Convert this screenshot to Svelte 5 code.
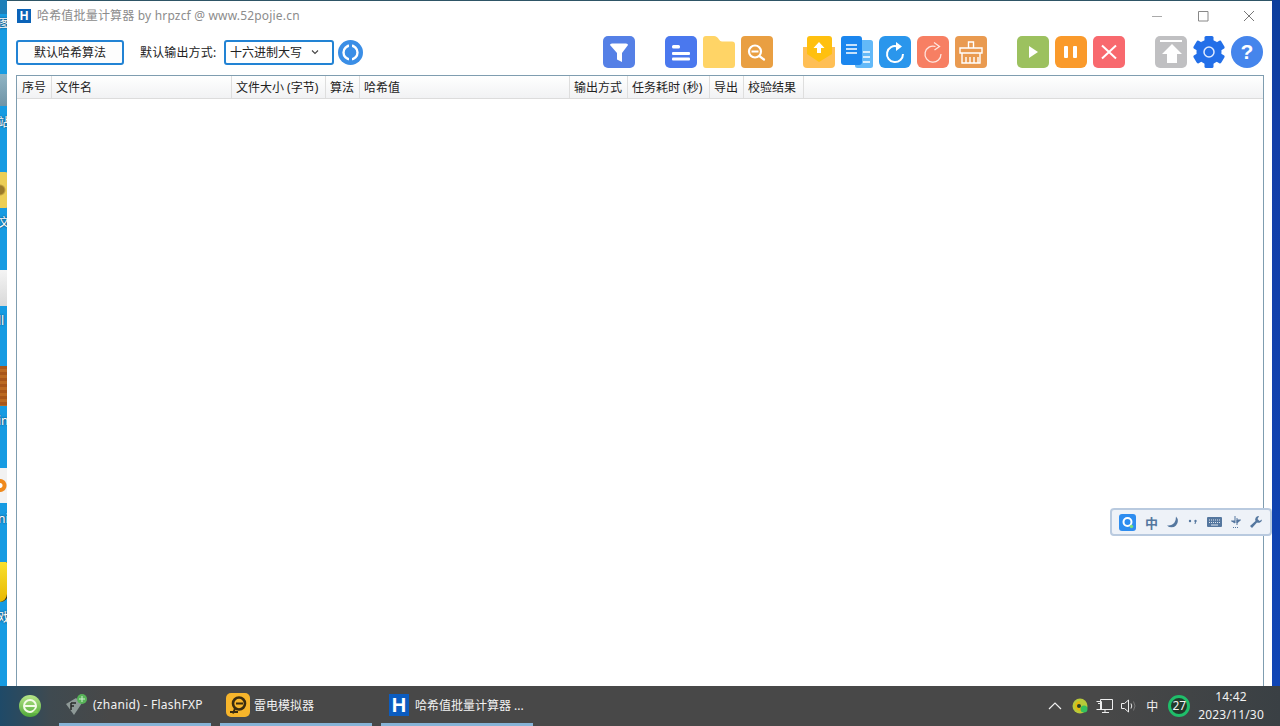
<script>
  const columns = [
    { label: '序号', w: 35 },
    { label: '文件名', w: 180 },
    { label: '文件大小 (字节)', w: 94 },
    { label: '算法', w: 34 },
    { label: '哈希值', w: 210 },
    { label: '输出方式', w: 58 },
    { label: '任务耗时 (秒)', w: 82 },
    { label: '导出', w: 34 },
    { label: '校验结果', w: 60 }
  ];
  const teeth = [0, 60, 120, 180, 240, 300];
</script>

<div class="screen">
  <div class="desk">
    <div class="strip left">
      <span class="frag f1"></span>
      <span class="lbl" style="top:17px">图</span>
      <span class="frag f2"></span>
      <span class="lbl" style="top:116px">站</span>
      <span class="frag f3"></span>
      <span class="lbl" style="top:216px">文</span>
      <span class="frag f4"></span>
      <span class="lbl" style="top:314px">ll</span>
      <span class="frag f5"></span>
      <span class="lbl" style="top:414px">in</span>
      <span class="frag f6"></span>
      <span class="lbl" style="top:512px">ni</span>
      <span class="frag f7"></span>
      <span class="lbl" style="top:611px">戏</span>
    </div>

    <div class="win">
      <header class="title">
        <div class="logo">H</div>
        <span class="title-text">哈希值批量计算器 by hrpzcf @ www.52pojie.cn</span>
        <div class="caption">
          <svg width="12" height="12" viewBox="0 0 12 12"><path d="M1 6.500h10" stroke="#aaa" fill="none"/></svg>
          <svg width="12" height="12" viewBox="0 0 12 12"><path d="M1.500 1.500h9.500v9.500h-9.500z" stroke="#888" fill="none"/></svg>
          <svg width="12" height="12" viewBox="0 0 12 12"><path d="M1 1l10 10M11 1L1 11" stroke="#777" fill="none"/></svg>
        </div>
      </header>

      <div class="toolbar">
        <button class="algo">默认哈希算法</button>
        <span class="out-label">默认输出方式:</span>
        <div class="select">
          <span>十六进制大写</span>
          <svg width="8" height="6" viewBox="0 0 8 6"><path d="M1 1.500l3 3 3-3" stroke="#444" stroke-width="1.100" fill="none"/></svg>
        </div>
        <svg class="reload" width="25" height="25" viewBox="0 0 25 25">
          <circle cx="12.500" cy="12.500" r="12.500" fill="#3a8ee6"/>
          <circle cx="12.500" cy="12.500" r="7" fill="none" stroke="#fff" stroke-width="2.400"/>
          <path d="M12.500 2v6M12.500 17v6" stroke="#3a8ee6" stroke-width="3"/>
        </svg>

        <div class="tools">
          <div class="group">
            <svg class="ic" viewBox="0 0 32 32"><rect width="32" height="32" rx="5" fill="#5580e6"/><path d="M7 9q0-1.500 2-1.500h14q2 0 2 1.500l-6 8v9l-5-2.500v-6.500z" fill="#fff"/></svg>
          </div>
          <div class="group">
            <svg class="ic" viewBox="0 0 32 32"><rect width="32" height="32" rx="5" fill="#4a78ee"/><rect x="7" y="9" width="8" height="3.500" rx="1.500" fill="#fff"/><rect x="7" y="16" width="18" height="3" rx="1" fill="#fff"/><rect x="7" y="21.500" width="18" height="3" rx="1" fill="#fff"/></svg>
            <svg class="ic" viewBox="0 0 32 32"><path d="M0 3q0-3 3-3h8q3 0 5 3.500q1 2 3 2h10q3 0 3 3v20q0 3.500-3 3.500H3q-3 0-3-3.500z" fill="#ffd466"/></svg>
            <svg class="ic" viewBox="0 0 32 32"><rect width="32" height="32" rx="4" fill="#e99f42"/><circle cx="14" cy="15.500" r="6" fill="none" stroke="#fff" stroke-width="2.200"/><path d="M10.500 15.500h7" stroke="#fff" stroke-width="2"/><path d="M19 20.500l4 3" stroke="#fff" stroke-width="2.200" stroke-linecap="round"/></svg>
          </div>
          <div class="group">
            <svg class="ic" viewBox="0 0 32 32"><path d="M0 11h32v17q0 4-4 4H4q-4 0-4-4z" fill="#ffbf55"/><path d="M4 3q0-3 3-3h19q3 0 3 3v15l-13 8-12-8z" fill="#ffc00f"/><path d="M16 6l5.500 6h-3.500v5h-4v-5h-3.500z" fill="#fff"/></svg>
            <svg class="ic" viewBox="0 0 32 32"><rect x="14" y="4" width="18" height="28" rx="2.500" fill="#63b9f8"/><rect width="21" height="29" rx="3" fill="#1b86ee"/><path d="M5 9h11M5 13h11M5 17h11" stroke="#fff" stroke-width="1.500"/><path d="M22 16h7M22 21h7M22 26h7" stroke="#fff" stroke-width="1.500"/></svg>
            <svg class="ic" viewBox="0 0 32 32"><rect width="32" height="32" rx="6" fill="#2a96ec"/><path d="M18.500 10.500A8 8 0 1 0 24 18" fill="none" stroke="#fff" stroke-width="2"/><path d="M17 6l6 4.500-6 4.500z" fill="#fff"/></svg>
            <svg class="ic" viewBox="0 0 32 32"><rect width="32" height="32" rx="6" fill="#f77f63"/><path d="M18.500 10.500A8 8 0 1 0 24 18" fill="none" stroke="#ffe6df" stroke-width="1.300"/><path d="M17 6.500l5.500 4-5 3.500" fill="none" stroke="#ffe6df" stroke-width="1.300"/></svg>
            <svg class="ic" viewBox="0 0 32 32"><rect width="32" height="32" rx="4" fill="#e99a50"/><path d="M13.500 12V6h5v6M5 12h22v5H5zM7 17v10h18V17M11 21v6M15 21v6M19 21v6M23 21v6" fill="none" stroke="#fff" stroke-width="1.400"/></svg>
          </div>
          <div class="group">
            <svg class="ic" viewBox="0 0 32 32"><rect width="32" height="32" rx="5" fill="#9cc15f"/><path d="M12 10l9 6-9 6z" fill="#fff"/></svg>
            <svg class="ic" viewBox="0 0 32 32"><rect width="32" height="32" rx="6" fill="#fa9a2b"/><rect x="9" y="10" width="4" height="12" rx="1" fill="#fff"/><rect x="18" y="10" width="4" height="12" rx="1" fill="#fff"/></svg>
            <svg class="ic" viewBox="0 0 32 32"><rect width="32" height="32" rx="5" fill="#f8696e"/><path d="M9 9.500l14 13M23 9.500l-14 13" stroke="#fff" stroke-width="2"/></svg>
          </div>
          <div class="group">
            <svg class="ic" viewBox="0 0 32 32"><rect width="32" height="32" rx="5" fill="#c0c0c2"/><rect x="5" y="4" width="22" height="2" fill="#fff"/><path d="M17 8l10 10h-5v9H12v-9H7z" fill="#fff"/></svg>
            <svg class="ic" viewBox="0 0 32 32">
              {#each teeth as t}
                <rect x="11.500" y="0" width="9" height="8" rx="1.500" fill="#236fe8" transform="rotate({t} 16 16)"/>
              {/each}
              <circle cx="16" cy="16" r="12.500" fill="#236fe8"/>
              <circle cx="16" cy="16" r="5" fill="none" stroke="#dfeaff" stroke-width="1.500"/>
            </svg>
            <div class="help">?</div>
          </div>
        </div>
      </div>

      <div class="table">
        <div class="thead">
          {#each columns as c}
            <div class="th" style="width:{c.w}px">{c.label}</div>
          {/each}
        </div>
      </div>

      <div class="ime">
        <svg width="17" height="17" viewBox="0 0 17 17"><rect width="17" height="17" rx="3" fill="#2e8df0"/><circle cx="8.500" cy="8" r="4" fill="none" stroke="#fff" stroke-width="2"/><circle cx="12.500" cy="12.500" r="1.700" fill="#7be07a"/></svg>
        <span class="ime-zh">中</span>
        <svg width="12" height="12" viewBox="0 0 12 12"><path d="M9 .5A6 6 0 0 1 0 9.500q5 .5 7.500-3Q9 4 9 .5z" fill="#55779f"/></svg>
        <svg width="10" height="12" viewBox="0 0 10 12"><circle cx="2" cy="5" r="1.200" fill="#55779f"/><circle cx="7.500" cy="5" r="1.200" fill="#55779f"/><path d="M7.500 6l-.5 2" stroke="#55779f"/></svg>
        <svg width="15" height="10" viewBox="0 0 15 10"><rect width="15" height="10" rx="1" fill="#55779f"/><path d="M2 3h11M2 5.500h11" stroke="#dfe6ef" stroke-dasharray="1 1"/><path d="M4 8h7" stroke="#dfe6ef"/></svg>
        <svg width="10" height="14" viewBox="0 0 10 14"><path d="M4 1v7L.5 6h3.500M6 3v7M6 5h3.500L6 8z" fill="#55779f" stroke="#55779f"/><path d="M2 12.500h6" stroke="#55779f" stroke-dasharray="1 1"/></svg>
        <svg width="12" height="12" viewBox="0 0 12 12"><path d="M8.500 0a3.500 3.500 0 0 0-3 5L0 10l2 2 5-5.500A3.500 3.500 0 0 0 12 3.500L9.500 5 7.500 3 9 .2z" fill="#55779f"/></svg>
      </div>
    </div>

    <div class="strip right"></div>
  </div>

  <footer class="taskbar">
    <div class="start">
      <svg width="24" height="24" viewBox="0 0 24 24">
        <defs><linearGradient id="st" x1="0" y1="0" x2="0" y2="1"><stop offset="0" stop-color="#b8e68a"/><stop offset="1" stop-color="#4fa838"/></linearGradient></defs>
        <circle cx="12" cy="12" r="11" fill="url(#st)"/><circle cx="12" cy="12" r="6" fill="none" stroke="#f4fbe8" stroke-width="2"/><path d="M6.500 12h11" stroke="#f4fbe8" stroke-width="2"/><path d="M19 14l-5 5h6z" fill="#79c650"/>
      </svg>
    </div>
    <div class="task first">
      <svg width="24" height="24" viewBox="0 0 24 24"><path d="M1 11l10-6 6 5-8 12z" fill="#8f9a98"/><path d="M6 10h5M6 10v7M6 13h3" stroke="#2a2a2a" stroke-width="1.500" fill="none"/><circle cx="17" cy="6" r="5" fill="#57b358"/><path d="M14 6h6M17 3v6" stroke="#d0f0d0"/></svg>
      <span class="latin">(zhanid) - FlashFXP</span>
    </div>
    <div class="task">
      <svg width="24" height="24" viewBox="0 0 24 24"><rect width="24" height="24" rx="5" fill="#f7b52b"/><circle cx="13" cy="10.500" r="6" fill="none" stroke="#3a2c10" stroke-width="2.600"/><path d="M9 15.500l-2 5M4 19h8M10 10.500h7" stroke="#3a2c10" stroke-width="2"/></svg>
      <span>雷电模拟器</span>
    </div>
    <div class="task">
      <div class="logo big">H</div>
      <span>哈希值批量计算器 ...</span>
    </div>

    <div class="tray">
      <svg class="chev" width="14" height="8" viewBox="0 0 14 8"><path d="M1 7l6-6 6 6" stroke="#f0f0f0" stroke-width="1.200" fill="none"/></svg>
      <svg width="16" height="16" viewBox="0 0 16 16"><circle cx="8" cy="8" r="7.500" fill="#b8c93a"/><path d="M8 3a5 5 0 1 0 5 5H8z" fill="#e2b80f"/><circle cx="7" cy="8" r="2" fill="#26402a"/><circle cx="12" cy="11" r="3.500" fill="#35c05c"/></svg>
      <svg width="17" height="16" viewBox="0 0 17 16"><path d="M4.500 1.500h12v10h-12zM.5 3.500h5v8h-5M9 11.500v3M6 14.500h7M2 5.500h2" fill="none" stroke="#eee"/></svg>
      <svg width="16" height="14" viewBox="0 0 16 14"><path d="M.5 4.500h3l4-3.500v12l-4-3.500h-3z" fill="none" stroke="#eee"/><path d="M10 4.500q1.500 2.500 0 5" fill="none" stroke="#eee"/><path d="M12.500 2.500q3 4.500 0 9" fill="none" stroke="#777"/></svg>
      <span class="tray-zh">中</span>
      <div class="badge">27</div>
      <div class="clock"><div>14:42</div><div>2023/11/30</div></div>
    </div>
  </footer>
</div>

<style>
  :global(body) {
    margin: 0;
    overflow: hidden;
    font-family: "Noto Sans", "Noto Sans CJK SC", sans-serif;
  }
  .screen {
    width: 1280px;
    height: 726px;
    display: flex;
    flex-direction: column;
    overflow: hidden;
    font-size: 12px;
  }
  .desk {
    flex: 1;
    min-height: 0;
    display: flex;
  }
  .strip.left {
    position: relative;
    width: 7px;
    background: #169be2;
    overflow: hidden;
  }
  .strip.right {
    width: 8px;
    background: linear-gradient(#0c3e9c, #123ea8 20%, #0f45b5);
  }
  .frag { position: absolute; left: 0; width: 8px; }
  .f1 { top: 0; height: 14px; background: #1d7fb8; }
  .f2 { top: 74px; height: 32px; background: linear-gradient(#8fb4c4, #6f94a6); }
  .f3 { top: 172px; height: 36px; background: radial-gradient(circle at 0 50%, #9a7a2a 0 4px, #ecce55 6px); border-radius: 0 3px 3px 0; }
  .f4 { top: 270px; height: 36px; background: linear-gradient(#f4f4f4, #d9d9d9); }
  .f5 { top: 366px; height: 40px; background: repeating-linear-gradient(#a8561a 0 3px, #bb6a22 3px 6px); }
  .f6 { top: 468px; height: 35px; background: radial-gradient(circle at 0 50%, #fff 0 2px, #f08a1c 3px 6px, #f2f2f2 7px); }
  .f7 { top: 562px; height: 40px; background: linear-gradient(#f8e030, #e8b800); border-radius: 0 2px 14px 0; box-shadow: inset -1px 0 0 #222; }
  .lbl {
    position: absolute;
    left: -2px;
    color: #fff;
    font-size: 12px;
    line-height: 14px;
    text-shadow: 0 0 2px #123;
    white-space: nowrap;
  }

  .win {
    position: relative;
    flex: 1;
    min-width: 0;
    display: flex;
    flex-direction: column;
    background: #fff;
    border-top: 1px solid #2e5566;
    color: #222;
  }
  .title {
    height: 30px;
    display: flex;
    align-items: center;
    padding-left: 10px;
    flex: none;
  }
  .logo {
    width: 14px;
    height: 14px;
    background: #0b63b8;
    color: #fff;
    font: 700 12px/14px "Liberation Sans", sans-serif;
    text-align: center;
    flex: none;
  }
  .logo.big {
    width: 20px;
    height: 22px;
    font-size: 20px;
    line-height: 22px;
    background: #0b5cc0;
  }
  .title-text {
    margin-left: 6px;
    color: #8c8c8c;
    line-height: 14px;
    letter-spacing: 0.18px;
  }
  .caption {
    margin-left: auto;
    display: flex;
    gap: 34px;
    padding-right: 17px;
  }
  .toolbar {
    height: 32px;
    margin-top: 5px;
    margin-bottom: 7px;
    padding-left: 9px;
    display: flex;
    align-items: center;
    flex: none;
  }
  .algo {
    width: 108px;
    height: 25px;
    margin: 0;
    padding: 0;
    box-sizing: border-box;
    border: 2px solid #2283d4;
    border-radius: 3px;
    background: #fdfdfd;
    color: #222;
    font: inherit;
  }
  .out-label { margin-left: 16px; width: 84px; white-space: nowrap; letter-spacing: .15px; }
  .select {
    width: 110px;
    height: 25px;
    box-sizing: border-box;
    border: 2px solid #2283d4;
    border-radius: 3px;
    padding: 0 13px 0 4px;
    display: flex;
    align-items: center;
    justify-content: space-between;
  }
  .reload { margin-left: 4px; }
  .tools {
    margin-left: 240px;
    display: flex;
    gap: 30px;
  }
  .group { display: flex; gap: 6px; }
  .ic { width: 32px; height: 32px; display: block; }
  .help {
    width: 32px;
    height: 32px;
    border-radius: 50%;
    background: #4585ec;
    color: #fff;
    font: 700 21px/32px "Liberation Sans", sans-serif;
    text-align: center;
  }
  .table {
    flex: 1;
    min-height: 0;
    margin: 0 8px 0 9px;
    border: 1px solid #7f9db0;
    border-bottom: 0;
  }
  .thead {
    height: 22px;
    display: flex;
    border-bottom: 1px solid #dcdcdc;
    background: linear-gradient(#fff, #f1f2f4);
  }
  .th {
    box-sizing: border-box;
    padding-left: 4px;
    border-right: 1px solid #dedede;
    line-height: 24px;
    white-space: nowrap;
    overflow: hidden;
    flex: none;
  }
  .th:first-child { padding-left: 5px; }
  .ime {
    position: absolute;
    left: 1103px;
    top: 507px;
    width: 162px;
    height: 28px;
    box-sizing: border-box;
    border: 2px solid #b9cadf;
    border-radius: 4px;
    background: #eef2f8;
    display: flex;
    align-items: center;
    gap: 9px;
    padding: 0 7px 0 7px;
    color: #55779f;
  }
  .ime-zh { font-weight: 700; font-size: 13px; }
  .taskbar {
    height: 40px;
    flex: none;
    display: flex;
    align-items: stretch;
    background: linear-gradient(90deg, #1f4a68 0, #3f4a50 50px, #484848 110px, #484848 1100px, #3a4044 1280px);
    color: #f2f2f2;
  }
  .start {
    width: 59px;
    display: flex;
    align-items: center;
    justify-content: center;
    flex: none;
  }
  .task {
    width: 152px;
    height: 40px;
    margin-right: 9px;
    padding-left: 6px;
    box-sizing: border-box;
    border-bottom: 3px solid #86b3d6;
    display: flex;
    align-items: center;
    gap: 4px;
    white-space: nowrap;
    flex: none;
  }
  .task.first { gap: 4px; }
  .latin { letter-spacing: .27px; }
  .task .logo.big { margin-right: 2px; margin-left: 2px; }
  .tray {
    margin-left: auto;
    display: flex;
    align-items: center;
    gap: 8px;
    padding-right: 16px;
  }
  .chev { margin-right: 2px; }
  .tray-zh { font-size: 12px; margin: 0 2px 0 1px; }
  .badge {
    width: 22px;
    height: 22px;
    box-sizing: border-box;
    border-radius: 50%;
    border: 3px solid #1fbe6a;
    background: #22392c;
    text-align: center;
    font-size: 12px;
    line-height: 16px;
    letter-spacing: -.3px;
  }
  .clock {
    text-align: center;
    line-height: 18px;
    letter-spacing: .2px;
  }
</style>
